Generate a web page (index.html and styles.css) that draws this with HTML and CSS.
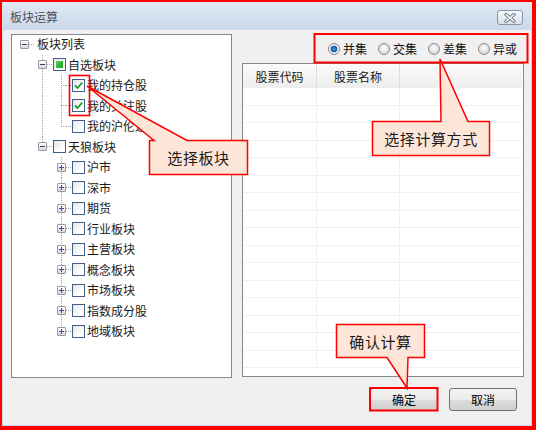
FILE: index.html
```html
<!DOCTYPE html>
<html>
<head>
<meta charset="utf-8">
<link rel="stylesheet" href="styles.css">
</head>
<body>
<div class="page">
  <div class="window">
    <div class="titlebar">
      <span class="title">板块运算</span>
      <span class="close"><svg width="14" height="10" viewBox="0 0 14 10"><path d="M3 1.5 L11 8.5 M11 1.5 L3 8.5" stroke="#6d7580" stroke-width="3.4" stroke-linecap="round"/><path d="M3 1.5 L11 8.5 M11 1.5 L3 8.5" stroke="#ffffff" stroke-width="1.4" stroke-linecap="round"/></svg></span>
    </div>
    <div class="body">
      <div class="tree">
        <div class="row l0"><span class="slot"><span class="exp minus"></span></span><span class="dash"></span><span class="txt">板块列表</span></div>
        <div class="row l1"><span class="slot v-full"><span class="exp minus"></span></span><span class="dash"></span><span class="cb part"></span><span class="txt">自选板块</span></div>
        <div class="row l2"><span class="pipe v-pipe"></span><span class="slot elbow"></span><span class="dash"></span><span class="cb"><svg width="11" height="11" viewBox="0 0 11 11"><path d="M2 5.5 L4.5 8 L9.2 2.6" fill="none" stroke="#1f9e2a" stroke-width="1.8"/></svg></span><span class="txt">我的持仓股</span></div>
        <div class="row l2"><span class="pipe v-pipe"></span><span class="slot elbow"></span><span class="dash"></span><span class="cb"><svg width="11" height="11" viewBox="0 0 11 11"><path d="M2 5.5 L4.5 8 L9.2 2.6" fill="none" stroke="#1f9e2a" stroke-width="1.8"/></svg></span><span class="txt">我的关注股</span></div>
        <div class="row l2"><span class="pipe v-pipe"></span><span class="slot elbow-last"></span><span class="dash"></span><span class="cb"></span><span class="txt">我的沪伦通</span></div>
        <div class="row l1"><span class="slot v-top"><span class="exp minus"></span></span><span class="dash"></span><span class="cb"></span><span class="txt">天狼板块</span></div>
        <div class="row l2"><span class="pipe"></span><span class="slot v-full"><span class="exp plus"></span></span><span class="dash"></span><span class="cb"></span><span class="txt">沪市</span></div>
        <div class="row l2"><span class="pipe"></span><span class="slot v-full"><span class="exp plus"></span></span><span class="dash"></span><span class="cb"></span><span class="txt">深市</span></div>
        <div class="row l2"><span class="pipe"></span><span class="slot v-full"><span class="exp plus"></span></span><span class="dash"></span><span class="cb"></span><span class="txt">期货</span></div>
        <div class="row l2"><span class="pipe"></span><span class="slot v-full"><span class="exp plus"></span></span><span class="dash"></span><span class="cb"></span><span class="txt">行业板块</span></div>
        <div class="row l2"><span class="pipe"></span><span class="slot v-full"><span class="exp plus"></span></span><span class="dash"></span><span class="cb"></span><span class="txt">主营板块</span></div>
        <div class="row l2"><span class="pipe"></span><span class="slot v-full"><span class="exp plus"></span></span><span class="dash"></span><span class="cb"></span><span class="txt">概念板块</span></div>
        <div class="row l2"><span class="pipe"></span><span class="slot v-full"><span class="exp plus"></span></span><span class="dash"></span><span class="cb"></span><span class="txt">市场板块</span></div>
        <div class="row l2"><span class="pipe"></span><span class="slot v-full"><span class="exp plus"></span></span><span class="dash"></span><span class="cb"></span><span class="txt">指数成分股</span></div>
        <div class="row l2"><span class="pipe"></span><span class="slot v-top"><span class="exp plus"></span></span><span class="dash"></span><span class="cb"></span><span class="txt">地域板块</span></div>
      </div>
      <div class="right">
        <div class="ops">
          <span class="opt"><span class="radio on"></span>并集</span>
          <span class="opt"><span class="radio"></span>交集</span>
          <span class="opt"><span class="radio"></span>差集</span>
          <span class="opt"><span class="radio"></span>异或</span>
        </div>
        <div class="list">
          <div class="lhead"><div class="hc">股票代码</div><div class="hc">股票名称</div><div class="hc last"></div></div>
          <div class="lrow"><div></div><div></div><div></div></div>
          <div class="lrow"><div></div><div></div><div></div></div>
          <div class="lrow"><div></div><div></div><div></div></div>
          <div class="lrow"><div></div><div></div><div></div></div>
          <div class="lrow"><div></div><div></div><div></div></div>
          <div class="lrow"><div></div><div></div><div></div></div>
          <div class="lrow"><div></div><div></div><div></div></div>
          <div class="lrow"><div></div><div></div><div></div></div>
          <div class="lrow"><div></div><div></div><div></div></div>
          <div class="lrow"><div></div><div></div><div></div></div>
          <div class="lrow"><div></div><div></div><div></div></div>
          <div class="lrow"><div></div><div></div><div></div></div>
          <div class="lrow"><div></div><div></div><div></div></div>
          <div class="lrow"><div></div><div></div><div></div></div>
          <div class="lrow"><div></div><div></div><div></div></div>
          <div class="lrow"><div></div><div></div><div></div></div>
        </div>
        <div class="btns">
          <button class="btn">确定</button>
          <button class="btn">取消</button>
        </div>
      </div>
    </div>
  </div>

  <svg class="overlay" width="536" height="430" viewBox="0 0 536 430">
    <rect x="69.5" y="75.5" width="20" height="40" fill="none" stroke="#ff0000" stroke-width="1.6"/>
    <rect x="314.5" y="34" width="213" height="28.5" fill="none" stroke="#ff0000" stroke-width="2"/>
    <rect x="370" y="388" width="67.5" height="22.5" fill="none" stroke="#ff0000" stroke-width="2"/>
    <path d="M149.5 140.5 H154 L87 86 L187 140.5 H247.5 V174.5 H149.5 Z" fill="#fde6d8" stroke="#ff0000" stroke-width="1.5" stroke-linejoin="miter"/>
    <path d="M372.5 121.5 H441 L440 59 L468 121.5 H489.5 V155.5 H372.5 Z" fill="#fde6d8" stroke="#ff0000" stroke-width="1.5"/>
    <path d="M336.5 324.5 H424.5 V357.5 H408 L407 388 L387 357.5 H336.5 Z" fill="#fde6d8" stroke="#ff0000" stroke-width="1.5"/>
  </svg>
  <div class="callout c1">选择板块</div>
  <div class="callout c2">选择计算方式</div>
  <div class="callout c3">确认计算</div>
</div>
</body>
</html>
```
FILE: styles.css
```css
:root {
  --vd: repeating-linear-gradient(to bottom, #a3a3a3 0 1px, transparent 1px 2px);
  --hd: repeating-linear-gradient(to right, #a3a3a3 0 1px, transparent 1px 2px);
}
html, body {
  margin: 0;
  padding: 0;
}
body {
  width: 536px;
  height: 430px;
  overflow: hidden;
  font-family: "Noto Sans CJK SC", "Noto Sans", sans-serif;
  font-size: 12px;
  color: #1a1a1a;
}
.page {
  position: relative;
  width: 536px;
  height: 430px;
}
.window {
  box-sizing: border-box;
  width: 536px;
  height: 430px;
  border: 2px solid #ff0000;
  border-right-width: 4px;
  border-bottom-width: 4px;
  background: linear-gradient(#e0e9f4, #cbd9ea 28px, #c9d7e9);
  display: flex;
  flex-direction: column;
}
.titlebar {
  height: 28px;
  flex: none;
  display: flex;
  align-items: center;
  justify-content: space-between;
  padding: 0 9px 0 8px;
}
.title {
  color: #4b4f55;
  font-size: 12px;
}
.close {
  box-sizing: border-box;
  width: 26px;
  height: 15px;
  margin-top: 3px;
  border: 1px solid #8894a8;
  border-radius: 3px;
  background: linear-gradient(#f5f8fb, #d6e0ec);
  display: flex;
  align-items: center;
  justify-content: center;
}
.body {
  flex: 1;
  margin: 0 1px 1px;
  background: #f0f0f0;
  display: flex;
  gap: 10px;
  padding: 4px 7px 0 8px;
}
.tree {
  flex: none;
  width: 221px;
  height: 344px;
  box-sizing: border-box;
  border: 1px solid #828790;
  background: #fff;
  padding-top: 0;
}
.row {
  display: flex;
  align-items: center;
  height: 20.5px;
}
.row.l0 { padding-left: 8px; margin-top: -1px; }
.row.l1 { padding-left: 26px; }
.row.l2 { padding-left: 26px; }
.slot {
  flex: none;
  width: 9px;
  align-self: stretch;
  display: flex;
  align-items: center;
  background-repeat: no-repeat;
}
.pipe {
  flex: none;
  width: 19px;
  align-self: stretch;
  background-repeat: no-repeat;
}
.v-pipe {
  background-image: var(--vd);
  background-size: 1px 100%;
  background-position: 4px 0;
}
.v-full {
  background-image: var(--vd);
  background-size: 1px 100%;
  background-position: 4px 0;
}
.v-top {
  background-image: var(--vd);
  background-size: 1px 50%;
  background-position: 4px 0;
}
.elbow {
  background-image: var(--vd), var(--hd);
  background-size: 1px 100%, 5px 1px;
  background-position: 4px 0, 4px 50%;
}
.elbow-last {
  background-image: var(--vd), var(--hd);
  background-size: 1px 50%, 5px 1px;
  background-position: 4px 0, 4px 50%;
}
.dash {
  flex: none;
  width: 6px;
  height: 1px;
  background: var(--hd);
}
.exp {
  box-sizing: border-box;
  width: 9px;
  height: 9px;
  border: 1px solid #999999;
  border-radius: 1px;
}
.exp.minus {
  background:
    linear-gradient(#243f70, #243f70) center / 5px 1px no-repeat,
    linear-gradient(#ffffff, #d9d9d9);
}
.exp.plus {
  background:
    linear-gradient(#3553a0, #3553a0) center / 5px 1px no-repeat,
    linear-gradient(#3553a0, #3553a0) center / 1px 5px no-repeat,
    linear-gradient(#ffffff, #d9d9d9);
}
.cb {
  flex: none;
  box-sizing: border-box;
  width: 13px;
  height: 13px;
  border: 1px solid #3f5f88;
  background: linear-gradient(135deg, #e4e4e4, #ffffff 70%);
  display: flex;
  align-items: center;
  justify-content: center;
}
.cb.part::after {
  content: "";
  width: 7px;
  height: 7px;
  background: linear-gradient(135deg, #5fd05f, #13a01b);
}
.txt {
  margin-left: 2px;
  white-space: nowrap;
  line-height: 1;
  color: #1a1a1a;
}
.right {
  flex: none;
  width: 282px;
  display: flex;
  flex-direction: column;
}
.ops {
  height: 29px;
  display: flex;
  align-items: center;
  justify-content: flex-end;
  gap: 11px;
  padding-right: 7px;
}
.opt {
  display: flex;
  align-items: center;
  gap: 3px;
  color: #111;
}
.radio {
  box-sizing: border-box;
  width: 12px;
  height: 12px;
  border-radius: 50%;
  border: 1px solid #8c8c8c;
  background: radial-gradient(circle at 50% 40%, #ffffff 0, #f2f2f2 2px, #d4d4d4 6px);
}
.radio.on {
  background: radial-gradient(circle at 50% 50%, #4aa2e6 0, #1b6fc0 2px, #0d4f95 3px, #e6e6e6 3.6px, #f7f7f7 6px);
}
.list {
  height: 314px;
  box-sizing: border-box;
  border: 1px solid #828790;
  background: #fff;
  padding-right: 1px;
}
.lhead {
  display: grid;
  grid-template-columns: 74px 83px 1fr;
  height: 24px;
  background: linear-gradient(#fafafa, #eeeeee);
}
.hc {
  display: flex;
  align-items: center;
  justify-content: center;
  border-right: 1px solid #dddddd;
  color: #1a1a1a;
}
.hc.last {
  border-right: none;
}
.lrow {
  display: grid;
  grid-template-columns: 74px 83px 1fr;
  height: 17.5px;
  box-sizing: border-box;
  border-bottom: 1px solid #f0f0f0;
}
.lrow div {
  border-right: 1px solid #f0f0f0;
}
.lrow div:last-child {
  border-right: none;
}
.btns {
  display: flex;
  justify-content: flex-end;
  gap: 11px;
  padding-right: 7px;
  margin-top: 11px;
}
.btn {
  box-sizing: border-box;
  width: 68px;
  height: 23px;
  padding: 0;
  border: 1px solid #707070;
  border-radius: 3px;
  background: linear-gradient(#f3f3f3 0, #ebebeb 50%, #dddddd 51%, #cfcfcf 100%);
  font-family: "Noto Sans CJK SC", sans-serif;
  font-size: 12px;
  color: #000;
}
.overlay {
  position: absolute;
  left: 0;
  top: 0;
  pointer-events: none;
}
.callout {
  position: absolute;
  display: flex;
  align-items: center;
  justify-content: center;
  font-size: 15px;
  letter-spacing: 0.6px;
  color: #1a1a1a;
}
.c1 { left: 149px; top: 140px; width: 99px; height: 35px; }
.c2 { left: 372px; top: 121px; width: 118px; height: 35px; }
.c3 { left: 336px; top: 324px; width: 89px; height: 34px; }
```
